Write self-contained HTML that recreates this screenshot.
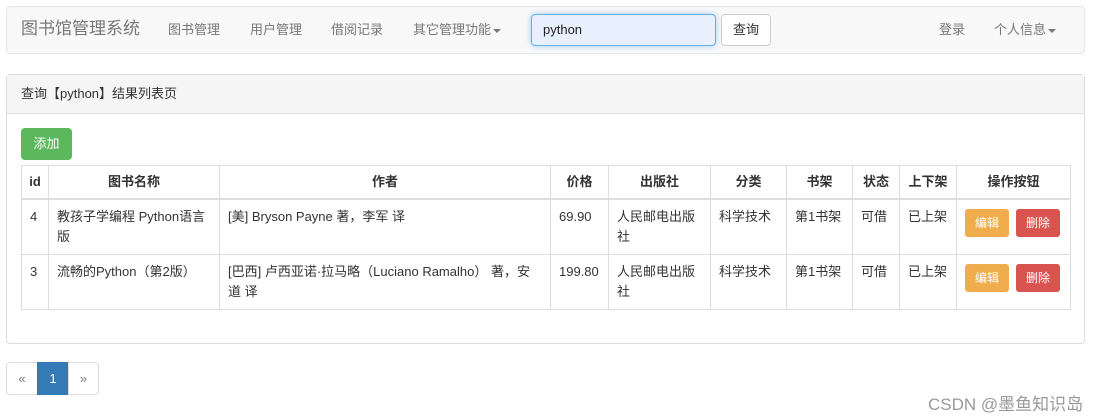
<!DOCTYPE html>
<html><head><meta charset="utf-8"><style>
*{box-sizing:border-box;margin:0;padding:0}
body{width:1103px;height:419px;background:#fff;font-family:"Liberation Sans","Noto Sans CJK SC",sans-serif;font-size:13px;color:#333;position:relative;overflow:hidden}
.a{position:absolute}
.nav{left:6px;top:6px;width:1079px;height:48px;background:#f8f8f8;border:1px solid #e7e7e7;border-radius:4px}
.nl{color:#777;font-size:13px;top:21px;line-height:18px}
.brand{left:21px;top:18px;font-size:17px;line-height:22px;color:#777}
.caret{display:inline-block;border-top:4px solid #777;border-left:4px solid transparent;border-right:4px solid transparent;vertical-align:middle;margin-left:2px}
.inp{left:531px;top:14px;width:185px;height:32px;border:1px solid #66afe9;border-radius:4px;background:#e8f0fe;box-shadow:0 0 6px rgba(102,175,233,.6);padding:0 11px;line-height:30px;font-size:13px;color:#222}
.btn{left:721px;top:14px;width:50px;height:32px;border:1px solid #ccc;border-radius:4px;background:#fff;text-align:center;line-height:30px}
.panel{left:6px;top:74px;width:1079px;height:270px;border:1px solid #ddd;border-radius:4px}
.ph{left:0;top:0;width:1077px;height:39px;background:#f5f5f5;border-bottom:1px solid #ddd;padding:0 14px;line-height:38px}
.add{left:21px;top:128px;width:51px;height:32px;background:#5cb85c;border-radius:4px;color:#fff;text-align:center;line-height:32px}
table{position:absolute;left:21px;top:165px;border-collapse:collapse;width:1050px}
td,th{border:1px solid #ddd;padding:7px 8px;vertical-align:top;line-height:20px;text-align:left}
th{text-align:center;font-weight:bold;border-bottom:2px solid #ddd;padding:6px 4px}
.be,.bd{display:inline-block;width:44px;height:28px;border-radius:3px;color:#fff;font-size:12px;text-align:center;line-height:28px;margin-top:2px}
.be{background:#f0ad4e;margin-right:7px}.bd{background:#d9534f}
.pg{top:362px;height:33px;border:1px solid #ddd;line-height:31px;text-align:center;color:#337ab7}
</style></head><body>
<div class="a nav"></div>
<div class="a brand">图书馆管理系统</div>
<div class="a nl" style="left:168px">图书管理</div>
<div class="a nl" style="left:250px">用户管理</div>
<div class="a nl" style="left:331px">借阅记录</div>
<div class="a nl" style="left:413px">其它管理功能<span class="caret"></span></div>
<div class="a inp">python</div>
<div class="a btn">查询</div>
<div class="a nl" style="left:939px">登录</div>
<div class="a nl" style="left:994px">个人信息<span class="caret"></span></div>
<div class="a panel"><div class="a ph">查询【python】结果列表页</div></div>
<div class="a add">添加</div>
<table>
<tr><th style="width:27px">id</th><th style="width:171px">图书名称</th><th style="width:331px">作者</th><th style="width:58px">价格</th><th style="width:102px">出版社</th><th style="width:76px">分类</th><th style="width:66px">书架</th><th style="width:47px">状态</th><th style="width:57px">上下架</th><th>操作按钮</th></tr>
<tr><td>4</td><td>教孩子学编程 Python语言版</td><td>[美] Bryson Payne 著，李军 译</td><td>69.90</td><td>人民邮电出版社</td><td>科学技术</td><td>第1书架</td><td>可借</td><td>已上架</td><td><span class="be">编辑</span><span class="bd">删除</span></td></tr>
<tr><td>3</td><td>流畅的Python（第2版）</td><td>[巴西] 卢西亚诺·拉马略（Luciano Ramalho） 著，安道 译</td><td>199.80</td><td>人民邮电出版社</td><td>科学技术</td><td>第1书架</td><td>可借</td><td>已上架</td><td><span class="be">编辑</span><span class="bd">删除</span></td></tr>
</table>
<div class="a pg" style="left:6px;width:32px;border-radius:4px 0 0 4px;color:#777">«</div>
<div class="a pg" style="left:37px;width:32px;background:#337ab7;border-color:#337ab7;color:#fff">1</div>
<div class="a pg" style="left:68px;width:31px;border-radius:0 4px 4px 0;color:#777">»</div>
<div class="a" style="left:928px;top:390px;font-size:17px;color:#999">CSDN @墨鱼知识岛</div>
</body></html>
